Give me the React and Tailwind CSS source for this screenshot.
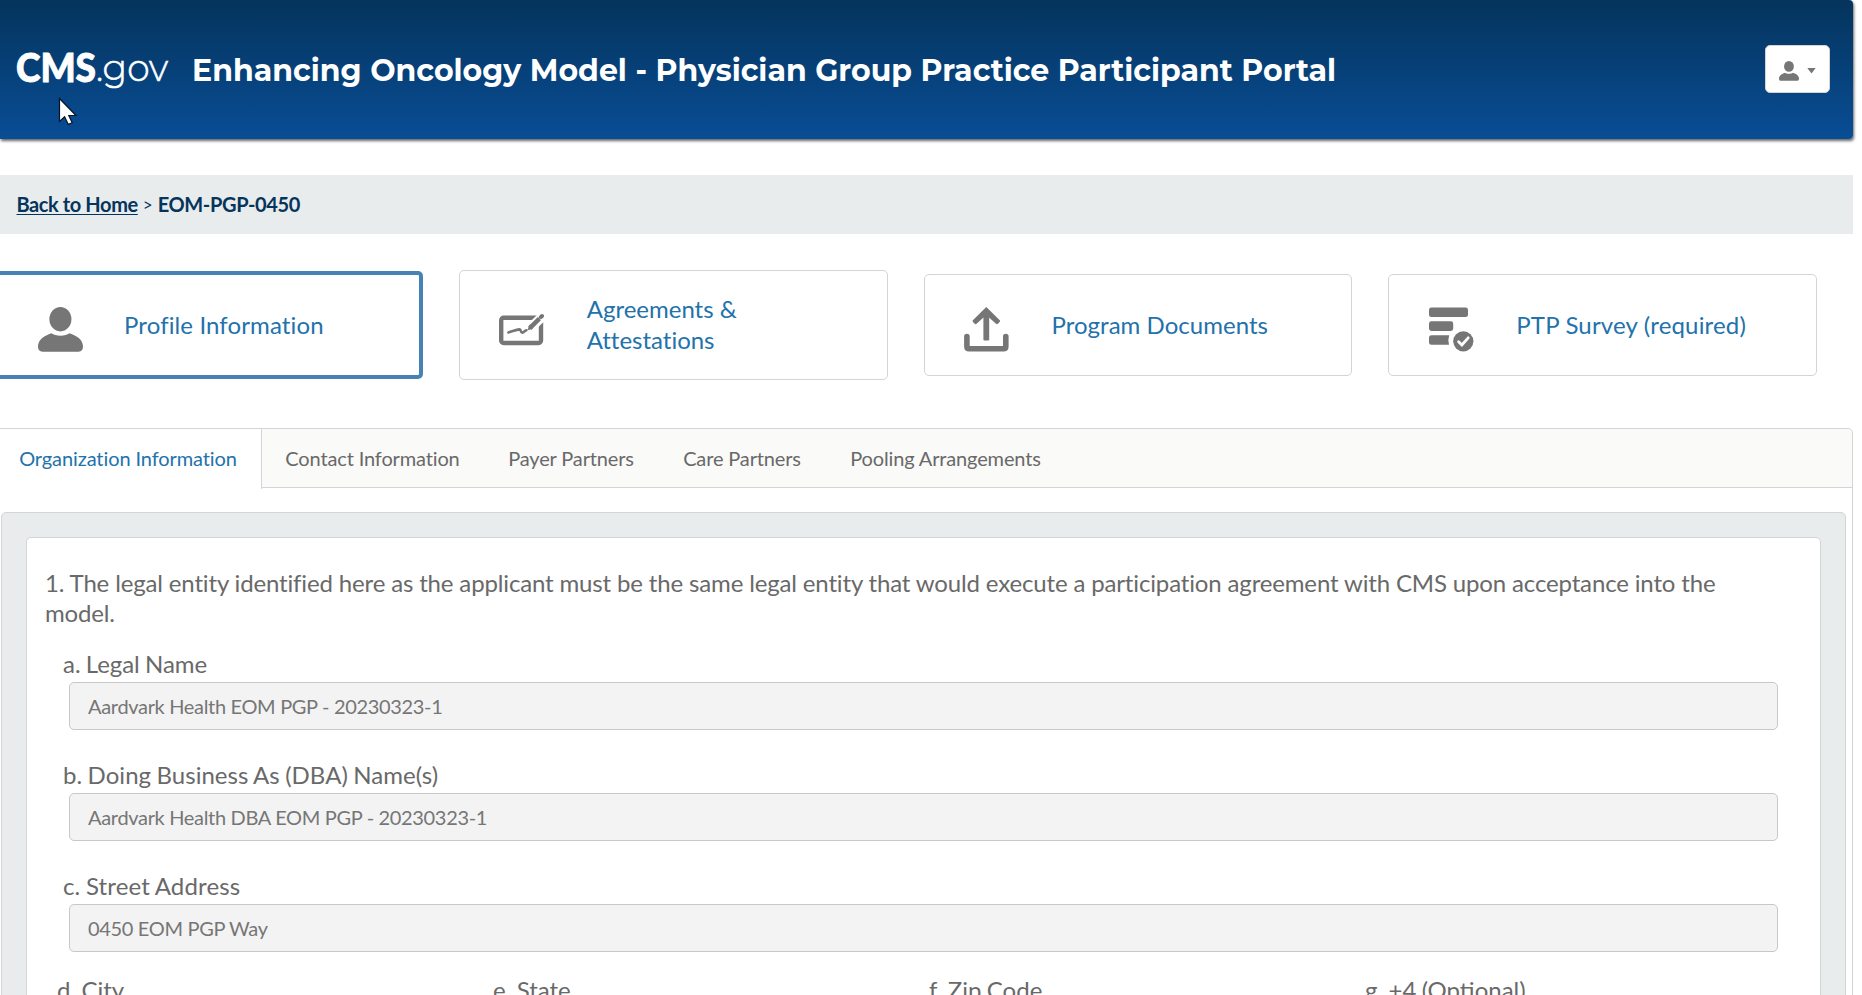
import React from "react";

function PersonIcon({ className }) {
  return (
    <svg viewBox="0 0 45 45" className={className} fill="currentColor" aria-hidden="true">
      <ellipse cx="22.4" cy="12.2" rx="11" ry="12.2" />
      <path d="M13.5 26.2C17 29.5 28 29.5 31.3 26.2C39 28.5 45 33 45 39.5C45 42.8 43.5 44.7 40.5 44.7H4.5C1.5 44.7 0 42.8 0 39.5C0 33 6 28.5 13.5 26.2Z" />
    </svg>
  );
}

function AgreementIcon() {
  return (
    <svg viewBox="0 0 45 45" className="h-[45px] w-[45px]" fill="none" aria-hidden="true">
      <rect x="2.2" y="10.8" width="39.8" height="25.2" rx="2.4" stroke="currentColor" strokeWidth="4.4" />
      <path d="M28.5 24L46 7" stroke="#fff" strokeWidth="9.5" />
      <path d="M30.6 21.4L40.4 11.6" stroke="currentColor" strokeWidth="4.4" />
      <path d="M31 17.8L29 22.8L34 21Z" fill="currentColor" stroke="currentColor" strokeWidth="0.8" />
      <path d="M41.8 10.2L43 9" stroke="currentColor" strokeWidth="4" strokeLinecap="round" />
      <path d="M9.4 25.4C13 24.6 17 22.8 20.6 22.4C22.6 22.4 21 25.6 23.4 25.6C25.2 25.6 25.6 23.6 27.4 23.2" stroke="currentColor" strokeWidth="2.6" strokeLinecap="round" strokeLinejoin="round" />
    </svg>
  );
}

function UploadIcon() {
  return (
    <svg viewBox="0 0 45 45" className="h-[45px] w-[45px]" fill="none" stroke="currentColor" aria-hidden="true">
      <path d="M2.9 29.5V39.5Q2.9 41.7 5.1 41.7H39.6Q41.8 41.7 41.8 39.5V29.5" strokeWidth="5.6" strokeLinecap="round" />
      <rect x="19.4" y="4" width="5.8" height="29.4" rx="1.2" fill="currentColor" stroke="none" />
      <path d="M22.3 0L8.6 13.4Q8.4 14.4 9.2 15.2L11 17Q11.8 17.4 12.6 16.8L22.3 8L32 16.8Q32.8 17.4 33.6 17L35.4 15.2Q36.2 14.4 36 13.4Z" fill="currentColor" stroke="none" />
    </svg>
  );
}

function SurveyIcon() {
  return (
    <svg viewBox="0 0 45 45" className="h-[45px] w-[45px]" fill="currentColor" aria-hidden="true">
      <rect x="0" y="0.5" width="39" height="9.6" rx="2.4" />
      <rect x="0" y="14.3" width="24.2" height="9.6" rx="2.4" />
      <path d="M2.4 28.2H20.2Q18.6 32.6 20 37.8H2.4Q0 37.8 0 35.4V30.6Q0 28.2 2.4 28.2Z" />
      <circle cx="34.3" cy="34.3" r="10.1" />
      <path d="M29.6 34.8L32.9 38L39.2 30.8" fill="none" stroke="#fff" strokeWidth="2.8" strokeLinecap="round" />
    </svg>
  );
}

const inactiveCard = "flex items-center self-center rounded-[5px] border border-[#d4d4d5] bg-white";

const cards = [
  { label: "Profile Information", icon: <PersonIcon className="h-[45px] w-[45px]" />, cls: "flex h-[108px] items-center self-center rounded-[5px] border-4 border-[#4682b4] bg-white pl-[39.5px]", text: "ml-[41.5px] tracking-[0.12px]" },
  { label: "Agreements & Attestations", icon: <AgreementIcon />, cls: inactiveCard + " h-[110px] pl-[39px]", text: "ml-[43px] w-[200px] tracking-[-0.01px]" },
  { label: "Program Documents", icon: <UploadIcon />, cls: inactiveCard + " h-[102px] pl-[39px]", text: "ml-[43px] tracking-[0.03px]" },
  { label: "PTP Survey (required)", icon: <SurveyIcon />, cls: inactiveCard + " h-[102px] pl-[39.5px]", text: "ml-[42.5px] tracking-[0.17px]" },
];

const tabs = [
  { label: "Contact Information", cls: "w-[222px] pr-px" },
  { label: "Payer Partners", cls: "w-[175px] pr-px" },
  { label: "Care Partners", cls: "w-[168px] pr-[2px]" },
  { label: "Pooling Arrangements", cls: "w-[238px] pr-px" },
];

const fields = [
  { label: "a. Legal Name", value: "Aardvark Health EOM PGP - 20230323-1", cls: "tracking-[-0.05px]" },
  { label: "b. Doing Business As (DBA) Name(s)", value: "Aardvark Health DBA EOM PGP - 20230323-1", cls: "tracking-[0.04px]" },
  { label: "c. Street Address", value: "0450 EOM PGP Way", cls: "tracking-[0.15px]" },
];

const columns = ["d. City", "e. State", "f. Zip Code", "g. +4 (Optional)"];

export default function App() {
  return (
    <div className="relative h-[995px] w-[1862px] overflow-hidden bg-white font-['Lato',sans-serif] text-[#696969]">
      <header className="flex h-[139px] w-[1853px] items-center rounded-r-[4px] bg-linear-to-b from-[#05345c] to-[#094d96] pl-[16px] pr-[23px] shadow-[1px_2px_3px_rgba(0,0,0,0.6)]">
        <svg className="h-[60px] w-[160px] shrink-0" viewBox="0 0 160 60" fill="#fff" role="img" aria-label="CMS.gov">
          <text x="0" y="41.5" fontFamily="Lato, sans-serif" fontWeight="900" fontSize="39" textLength="80" lengthAdjust="spacingAndGlyphs" stroke="#fff" strokeWidth="0.9">CMS</text>
          <text x="80" y="41" fontFamily="Montserrat, sans-serif" fontWeight="300" fontSize="38" textLength="72" lengthAdjust="spacingAndGlyphs" stroke="#fff" strokeWidth="0.6">.gov</text>
        </svg>
        <h1 className="ml-[16px] mt-[2px] whitespace-nowrap font-['Montserrat',sans-serif] text-[30px] font-bold leading-9 tracking-[0.02px] text-white">
          Enhancing Oncology Model - Physician Group Practice Participant Portal
        </h1>
        <button className="mb-px ml-auto flex h-[48px] w-[65px] items-center rounded-[5px] border border-[#d4d4d5] bg-white pl-[12.5px] text-[#767676]">
          <PersonIcon className="mt-[3px] h-[20px] w-[20px]" />
          <svg viewBox="0 0 9 6" className="ml-[8px] mt-[4px] h-[6px] w-[9px]" fill="currentColor" aria-hidden="true">
            <path d="M0.3 0H8.7L4.5 5.6Z" />
          </svg>
        </button>
      </header>

      <nav className="mt-[36px] flex h-[59px] w-[1853px] items-center gap-[5px] bg-[#e8ecec] pb-[2px] pl-[16.5px] text-[20px] font-bold leading-6 text-[#05345c]">
        <a className="tracking-[-0.4px] underline decoration-1 underline-offset-2">Back to Home</a>
        <span className="mt-[2px] text-[17px] font-normal">&gt;</span>
        <span className="tracking-[-0.35px]">EOM-PGP-0450</span>
      </nav>

      <div className="ml-[-6px] mt-[36px] grid h-[110px] w-[1823px] grid-cols-4 gap-x-9 text-[24px] leading-[31px] text-[#2272ab]">
        {cards.map((c) => (
          <a key={c.label} className={c.cls}>
            <span className="mt-[8px] shrink-0 text-[#767676]">{c.icon}</span>
            <span className={"mb-[2px] " + c.text}>{c.label}</span>
          </a>
        ))}
      </div>

      <section className="ml-[-5px] mt-[48px] w-[1858px] rounded-tr-[5px] border border-[#d4d4d5]">
        <div className="flex h-[59px] rounded-tr-[5px] border-b border-[#d4d4d5] bg-[#fafaf9] text-[20px] leading-6 tracking-[-0.14px]">
          <a className="-mb-px flex h-[60px] w-[266px] items-center justify-center border-r border-[#d4d4d5] bg-white pb-[2px] pr-px tracking-[-0.1px] text-[#2272ab]">
            Organization Information
          </a>
          {tabs.map((t) => (
            <a key={t.label} className={"flex items-center justify-center " + t.cls}>{t.label}</a>
          ))}
        </div>

        <div className="ml-[5px] mr-[6px] mt-[24px] rounded-[5px] border border-[#d4d4d5] bg-[#e8ecec] p-[24px]">
          <div className="h-[520px] rounded-[5px] border border-[#d4d4d5] bg-white pl-[18px] pt-[30px] text-[24px] leading-[30px]">
            <p className="w-[1690px] tracking-[-0.15px]">
              1. The legal entity identified here as the applicant must be the same legal entity that would execute a participation agreement with CMS upon acceptance into the model.
            </p>
            <div className="mt-[21px] pl-[18px]">
              {fields.map((f) => (
                <div key={f.label} className="mb-[30px] last:mb-[23px]">
                  <div className={"[word-spacing:-0.8px] " + f.cls}>{f.label}</div>
                  <div className="ml-[6px] mt-[3px] flex h-[48px] w-[1709px] items-center rounded-[5px] border border-[#c8c8c9] bg-[#f3f3f3] pl-[18px] text-[20px] leading-6 tracking-[-0.33px] text-[#767676]">
                    {f.value}
                  </div>
                </div>
              ))}
            </div>
            <div className="grid w-[1756px] grid-cols-4 pl-[12px]">
              {columns.map((c) => (
                <div key={c} className="[word-spacing:-0.8px]">{c}</div>
              ))}
            </div>
          </div>
        </div>
      </section>

      <svg className="absolute left-[58px] top-[97px] h-[30px] w-[20px]" viewBox="0 0 20 30" aria-hidden="true">
        <path d="M1.5 1.5V24.5L6.6 19.8L10.3 27.4L14.2 25.8L10.8 18.5H18Z" fill="#fff" stroke="#071428" strokeWidth="1.2" />
      </svg>
    </div>
  );
}
